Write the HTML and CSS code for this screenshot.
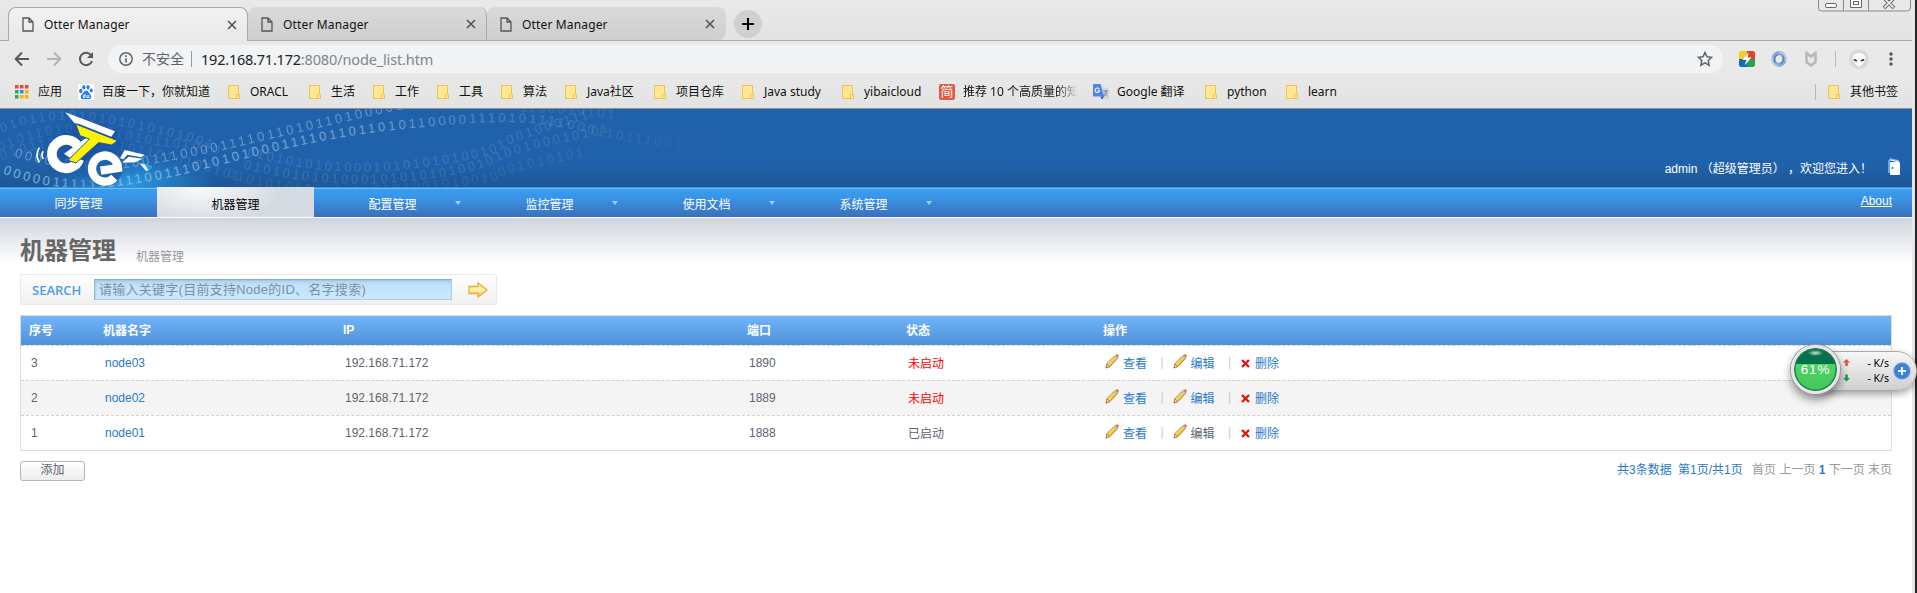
FILE: index.html
```html
<!DOCTYPE html>
<html lang="zh-CN">
<head>
<meta charset="utf-8">
<title>Otter Manager</title>
<link rel="stylesheet" href="styles.css">
</head>
<body>
<svg class="defs" width="0" height="0">
  <defs>
    <linearGradient id="pencilBody" x1="0" y1="0" x2="1" y2="1"><stop offset="0.3" stop-color="#fff09a"/><stop offset="0.7" stop-color="#e6a800"/></linearGradient>
    <linearGradient id="goFill" x1="0" y1="0" x2="0" y2="1"><stop offset="0" stop-color="#ffe08a"/><stop offset="0.5" stop-color="#fff3a8"/><stop offset="1" stop-color="#ffad5c"/></linearGradient>
    <radialGradient id="glow"><stop offset="0" stop-color="#2c9be6" stop-opacity="0.95"/><stop offset="1" stop-color="#2c9be6" stop-opacity="0"/></radialGradient>
    <radialGradient id="shade"><stop offset="0" stop-color="#174c9c" stop-opacity="0.75"/><stop offset="0.6" stop-color="#174c9c" stop-opacity="0.4"/><stop offset="1" stop-color="#174c9c" stop-opacity="0"/></radialGradient>
    <symbol id="page" viewBox="0 0 12 15"><path d="M1 1h6l4 4v9H1zM7 1v4h4" fill="none" stroke="#555" stroke-width="1.3"/></symbol>
    <symbol id="close" viewBox="0 0 10 10"><path d="M1 1l8 8M9 1L1 9" stroke="#505256" stroke-width="1.6"/></symbol>
    <symbol id="folder" viewBox="0 0 12 14"><path d="M.5.5h10V9.500h1V13.500H.5z" fill="#ffe694" stroke="#eac44b"/><path d="M8.500 13.500V9.500h3" fill="none" stroke="#eac44b"/></symbol>
    <symbol id="pencil" viewBox="0 0 14 15"><path d="M1 14l1-4.500L10 1.500l3 2.500L5 12.500z" fill="url(#pencilBody)" stroke="#a8782c" stroke-width=".9"/><path d="M1 14l1-4 2.700 2.500z" fill="#f0e0c0" stroke="#9c6a3a" stroke-width=".7"/><path d="M9.300 2.300l3 2.500" stroke="#b9c3c9" stroke-width="1.800"/><path d="M10.500 1l2 -.8 1.300 1.400-.6 2z" fill="#f35b1c"/></symbol>
    <symbol id="cross" viewBox="0 0 9 9"><path d="M1 1l7 7M8 1L1 8" stroke="#e60f0f" stroke-width="2.300"/></symbol>
  </defs>
</svg>
<div class="window">
  <div class="browser">
    <div class="tabs">
      <div class="tab active"><svg class="fav"><use href="#page"/></svg><span>Otter Manager</span><svg class="x"><use href="#close"/></svg></div>
      <div class="tab"><svg class="fav"><use href="#page"/></svg><span>Otter Manager</span><svg class="x"><use href="#close"/></svg></div>
      <div class="tab last"><svg class="fav"><use href="#page"/></svg><span>Otter Manager</span><svg class="x"><use href="#close"/></svg></div>
      <div class="newtab"><svg width="12" height="12"><path d="M6 0v12M0 6h12" stroke="#000" stroke-width="2"/></svg></div>
      <svg class="winbtns" width="94" height="12" viewBox="0 0 94 12"><g fill="none" stroke="#8b8b8b"><path d="M.5 0v8q0 3 3 3h86q3 0 3-3V0M25.500 0v11M50.500 0v11"/></g><g fill="#fff" stroke="#666"><rect x="7.500" y="3.500" width="11" height="4" rx="1.500"/><path d="M32.500-2v9.500h11V-2"/><rect x="35.500" y="1.500" width="5" height="3"/></g><path d="M66-2l10 10M76-2L66 8" stroke="#666" stroke-width="3.600"/><path d="M66.500-1.500l9 9M75.500-1.500l-9 9" stroke="#fff" stroke-width="1.600"/></svg>
    </div>
    <div class="toolbar">
      <svg width="16" height="16" viewBox="0 0 16 16"><path d="M15 8H2M8 1.500L1.700 8 8 14.500" fill="none" stroke="#55585c" stroke-width="2"/></svg>
      <svg width="16" height="16" viewBox="0 0 16 16"><path d="M1 8h13M8 1.500L14.300 8 8 14.500" fill="none" stroke="#b2b3b5" stroke-width="2"/></svg>
      <svg width="16" height="16" viewBox="0 0 16 16"><path d="M13.300 4.500A6.200 6.200 0 1 0 14 10" fill="none" stroke="#55585c" stroke-width="2"/><path d="M15 1v6H9z" fill="#55585c"/></svg>
      <div class="omnibox">
        <svg width="14" height="14" viewBox="0 0 14 14"><circle cx="7" cy="7" r="6.200" fill="none" stroke="#5f6368" stroke-width="1.500"/><path d="M7 6.200v4.300M7 3.300v1.700" stroke="#5f6368" stroke-width="1.600"/></svg>
        <span class="insecure">不安全</span><i class="bar"></i>
        <span class="url"><b>192.168.71.172</b>:8080/node_list.htm</span>
        <svg class="star" width="16" height="16" viewBox="0 0 16 16"><path d="M8 1.500l2 4.300 4.600.5-3.400 3.200.9 4.700L8 11.900l-4.100 2.300.9-4.700L1.400 6.300 6 5.800z" fill="none" stroke="#5f6368" stroke-width="1.500"/></svg>
      </div>
      <div class="exts">
        <svg width="16" height="16" viewBox="0 0 16 16"><defs><clipPath id="rc"><rect width="16" height="16" rx="2.500"/></clipPath></defs><g clip-path="url(#rc)"><path d="M0 0h8v8H0z" fill="#f6cf1d"/><path d="M8 0h8v8H8z" fill="#e53f34"/><path d="M0 8h8v8H0z" fill="#0e6dbd"/><path d="M8 8h8v8H8z" fill="#25a352"/></g><path d="M9.500 1.500L3.500 9H7.500L5.500 14.500 12.500 6.500H8.800z" fill="#fff"/></svg>
        <svg width="16" height="16" viewBox="0 0 16 16"><ellipse cx="8" cy="8" rx="5.400" ry="5.900" fill="none" stroke="#86a9d1" stroke-width="4.200"/><path d="M8 1A7 7 0 0 1 14.500 10M8 15A7 7 0 0 1 1.500 6" fill="none" stroke="#b4cbe4" stroke-width="1.500"/><path d="M4.500 11.500A5 5 0 0 1 7 3.500M9.500 12.500A5 5 0 0 0 11.500 5" fill="none" stroke="#557fb2" stroke-width="1.200"/></svg>
        <svg width="16" height="16" viewBox="0 0 16 16"><path d="M3.500 11V2L8 5.500 12.500 2v9L8 14.500z" fill="none" stroke="#b9b9b9" stroke-width="2.600"/></svg>
        <i class="bar"></i>
        <svg class="avatar" width="20" height="20" viewBox="0 0 20 20"><circle cx="10" cy="10" r="10" fill="#d9d9d9"/><path d="M3.500 9Q4 4 10 4t6.500 5Q16 14 10 18 4 14 3.500 9z" fill="#fafafa"/><ellipse cx="6.500" cy="11.300" rx="2" ry=".9" transform="rotate(25 6.500 11)" fill="#222"/><ellipse cx="13.500" cy="11.300" rx="2" ry=".9" transform="rotate(-25 13.500 11)" fill="#222"/></svg>
        <svg class="menu" width="4" height="14" viewBox="0 0 4 14" fill="#55585c"><circle cx="2" cy="2" r="1.700"/><circle cx="2" cy="7" r="1.700"/><circle cx="2" cy="12" r="1.700"/></svg>
      </div>
    </div>
    <div class="bookmarks">
      <div><svg width="14" height="14" viewBox="0 0 14 14"><path d="M0 0h3.500v3.500H0zM5 0h3.500v3.500H5zM10 0h3.500v3.500H10z" fill="#f04438"/><path d="M0 5h3.500v3.500H0z" fill="#31a853"/><path d="M5 5h3.500v3.500H5z" fill="#3b82f0"/><path d="M10 5h3.500v3.500H10z" fill="#f5b400"/><path d="M0 10h3.500v3.500H0z" fill="#31a853"/><path d="M5 10h3.500v3.500H5zM10 10h3.500v3.500H10z" fill="#f5b400"/></svg><span>应用</span></div>
      <div><svg width="16" height="16" viewBox="0 0 16 16"><path d="M0 0h16v16H0z" fill="#fff"/><g fill="#2d7df0"><ellipse cx="2.800" cy="7" rx="1.700" ry="2.200"/><ellipse cx="5.800" cy="3.200" rx="1.600" ry="2.200"/><ellipse cx="10" cy="3.200" rx="1.600" ry="2.200"/><ellipse cx="13.200" cy="6.500" rx="1.600" ry="2.100"/><path d="M8 6.500c2 0 2.500 2 4 3.500 2.500 2.500 1 5.500-1.500 5.300-1.500-.3-3-.3-5 0C3 15.500 1.500 12.500 4 10.200 5.500 9 6 6.500 8 6.500z"/></g><path d="M7 10v3.500H5.500v-2H7M9 11v2.500h2V11" fill="none" stroke="#fff" stroke-width=".9"/></svg><span>百度一下，你就知道</span></div>
      <div><svg class="fo"><use href="#folder"/></svg><span>ORACL</span></div>
      <div><svg class="fo"><use href="#folder"/></svg><span>生活</span></div>
      <div><svg class="fo"><use href="#folder"/></svg><span>工作</span></div>
      <div><svg class="fo"><use href="#folder"/></svg><span>工具</span></div>
      <div><svg class="fo"><use href="#folder"/></svg><span>算法</span></div>
      <div><svg class="fo"><use href="#folder"/></svg><span>Java社区</span></div>
      <div><svg class="fo"><use href="#folder"/></svg><span>项目仓库</span></div>
      <div><svg class="fo"><use href="#folder"/></svg><span>Java study</span></div>
      <div><svg class="fo"><use href="#folder"/></svg><span>yibaicloud</span></div>
      <div><em class="jian">简</em><span class="fade">推荐 10 个高质量的知</span></div>
      <div><svg width="16" height="16" viewBox="0 0 16 16"><path d="M6 3.500h10V15.500H9z" fill="#d4d7dc"/><path d="M1 0h6.500l3.800 12.500H1q-1 0-1-1V1q0-1 1-1z" fill="#4a86ee"/><path d="M7.500 12.500h3.800L8.700 15.500z" fill="#2c58b8"/><path d="M6.200 5A2.200 2.200 0 1 0 6.500 6.800H4.600" fill="none" stroke="#fff" stroke-width="1.100"/><path d="M10.500 7h4.500M12.700 6v1M14 7q-.7 3-3 5M11.500 8.500q1 2.500 3 3.500" fill="none" stroke="#75808c"/></svg><span>Google 翻译</span></div>
      <div><svg class="fo"><use href="#folder"/></svg><span>python</span></div>
      <div><svg class="fo"><use href="#folder"/></svg><span>learn</span></div>
      <div class="other"><svg class="fo"><use href="#folder"/></svg><span>其他书签</span></div>
    </div>
  </div>

  <div class="page">
    <header class="banner">
      <svg class="art" width="720" height="78" viewBox="0 12 2160 234">
        <defs>
          <path id="pa" d="M42 155Q250 215 440 180T700 128 1080 40 1350 18"/>
          <path id="pb" d="M8 205Q160 260 300 248T560 205 820 140 1080 88 1400 55 1755 82 2180 140"/>
          <path id="pc" d="M5 82Q140 30 280 50T560 108 700 180 900 270"/>
          <path id="pd" d="M0 140Q160 60 330 95T560 130 800 200 1000 290"/>
          <path id="pe" d="M5 165Q170 100 330 130T620 200 800 245"/>
          <path id="pf" d="M740 150Q980 220 1220 192T1500 135 1700 60 1850 0"/>
          <path id="pg" d="M730 190Q960 250 1180 232T1480 175 1700 110 1900 50"/>
          <path id="ph" d="M680 215Q900 290 1200 262T1500 220 1700 165 1900 140"/>
          <path id="pi" d="M1560 20Q1760 25 1980 62"/>
          <linearGradient id="fadeDigits" gradientUnits="userSpaceOnUse" x1="0" y1="0" x2="2160" y2="0"><stop offset="0" stop-color="#8fd0e4" stop-opacity=".75"/><stop offset=".25" stop-color="#9fd2f0" stop-opacity=".65"/><stop offset=".5" stop-color="#bcd4ee" stop-opacity=".55"/><stop offset=".75" stop-color="#a0c0e0" stop-opacity=".28"/><stop offset="1" stop-color="#a0c0e0" stop-opacity="0"/></linearGradient>
        </defs>
        <ellipse cx="390" cy="236" rx="260" ry="84" fill="url(#glow)"/>
        <g class="digits">
          <text opacity=".17"><textPath href="#pc">0101101010101010101001</textPath></text>
          <text opacity=".14"><textPath href="#pd">01011010101010101101010</textPath></text>
          <text opacity=".13"><textPath href="#pe">0101101010101011010100101</textPath></text>
          <text opacity=".17"><textPath href="#pf">010101010100010101010100101001000111</textPath></text>
          <text opacity=".16"><textPath href="#pg">01010101010001010101010010100100010101</textPath></text>
          <text opacity=".10"><textPath href="#ph">0101010100101010101001010010001010101</textPath></text>
          <text opacity=".12"><textPath href="#pi">1110010101</textPath></text>
          <text class="wide" opacity=".42"><textPath href="#pa">0000101011110011100001111011010110100001111</textPath></text>
          <text class="wide" fill="url(#fadeDigits)"><textPath href="#pb">0000011111111110011101010100011110110110101100001110101111000110111001010</textPath></text>
        </g>
        <ellipse cx="260" cy="135" rx="150" ry="115" fill="url(#shade)"/>
        <path d="M196 22L345 79 334 95 238 57 224 55z" fill="#fff"/>
        <path d="M235 126A42.500 42.500 0 1 0 238 162" fill="none" stroke="#fff" stroke-width="29"/>
        <path d="M192 146L250 104 262 98 276 106 210 158z" fill="#fff"/>
        <path d="M227 57L353 107 335 120 296 113 228 174 204 166 268 102 240 92z" fill="#fff200" stroke="#1b55a4" stroke-width="3"/>
        <circle cx="314" cy="190" r="54" fill="#1f62b0"/>
        <path d="M302 197L354 189A39 39 0 1 0 343 218" fill="none" stroke="#fff" stroke-width="25"/>
        <path d="M360 160L374 135 434 149 424 157 382 149 370 163z" fill="#fff"/>
        <path d="M366 173L386 155 428 161 406 172z" fill="#fff"/>
        <path d="M418 174L455 184Q452 197 438 198z" fill="#e8f7ff"/><path d="M434 178l21 6q-1 10-9 13z" fill="#21a4e8"/>
        <path d="M118 128q-14 22 0 44M130 139q-8 11 0 23" fill="none" stroke="#fff" stroke-width="5"/>
      </svg>
      <div class="welcome"><span>admin （超级管理员） ，欢迎您进入！</span>
        <svg width="13" height="18" viewBox="0 0 13 18"><path d="M1 15V3L2.500 1 11 3" fill="none" stroke="#86bdf5" stroke-width="1.500"/><path d="M2.500 2L11 4" stroke="#fff"/><rect x="2" y="4" width="10" height="13" rx="1" fill="#fff"/><circle cx="4.500" cy="10" r="1" fill="#2467b0"/></svg>
      </div>
    </header>
    <nav class="nav">
      <a class="first">同步管理</a><a class="current">机器管理</a><a class="drop">配置管理</a><a class="drop">监控管理</a><a class="drop">使用文档</a><a class="drop">系统管理</a>
      <span class="about">About</span>
    </nav>
    <main>
      <div class="heading"><h1>机器管理</h1><span>机器管理</span></div>
      <div class="search"><label>SEARCH</label><div class="field">请输入关键字(目前支持Node的ID、名字搜索)</div>
        <svg width="20" height="16" viewBox="0 0 20 16"><path d="M1 4.500h9V1l9 7-9 7v-3.500H1z" fill="url(#goFill)" stroke="#dfb436" stroke-width="1.300"/></svg></div>
      <div class="table">
        <div class="row head"><span>序号</span><span>机器名字</span><span>IP</span><span>端口</span><span>状态</span><span>操作</span></div>
        <div class="row"><span>3</span><a>node03</a><span>192.168.71.172</span><span>1890</span><span class="state off">未启动</span><span class="ops"><svg class="pen"><use href="#pencil"/></svg><a>查看</a><i>|</i><svg class="pen"><use href="#pencil"/></svg><a>编辑</a><i>|</i><svg class="del"><use href="#cross"/></svg><a>删除</a></span></div>
        <div class="row alt"><span>2</span><a>node02</a><span>192.168.71.172</span><span>1889</span><span class="state off">未启动</span><span class="ops"><svg class="pen"><use href="#pencil"/></svg><a>查看</a><i>|</i><svg class="pen"><use href="#pencil"/></svg><a>编辑</a><i>|</i><svg class="del"><use href="#cross"/></svg><a>删除</a></span></div>
        <div class="row"><span>1</span><a>node01</a><span>192.168.71.172</span><span>1888</span><span class="state">已启动</span><span class="ops"><svg class="pen"><use href="#pencil"/></svg><a>查看</a><i>|</i><svg class="pen"><use href="#pencil"/></svg><em>编辑</em><i>|</i><svg class="del"><use href="#cross"/></svg><a>删除</a></span></div>
      </div>
      <div class="footer"><button class="add">添加</button>
        <div class="pager"><a>共3条数据</a><a>第1页/共1页</a><span>首页</span><span>上一页</span><b>1</b><span>下一页</span><span>末页</span></div></div>
    </main>
  </div>
  <div class="meter">
    <div class="pill">
      <svg width="7" height="24" viewBox="0 0 7 24"><path d="M3.500 0L7 3.500H4.800V7H2.200V3.500H0z" fill="#e2553c"/><path d="M3.500 22.500L7 19H4.800V15.500H2.200V19H0z" fill="#1f9c4e"/></svg>
      <div class="rates"><span>- K/s</span><span>- K/s</span></div>
      <svg width="18" height="18" viewBox="0 0 18 18"><circle cx="9" cy="9" r="8.500" fill="#3b82dc" stroke="#b9bfc8"/><path d="M9 5v8M5 9h8" stroke="#fff" stroke-width="1.800"/></svg>
    </div>
    <div class="ball"><span>61%</span></div>
  </div>
</div>
</body>
</html>
```

FILE: styles.css
```css
* { box-sizing: border-box; }
body { margin: 0; overflow: hidden; font: 12px "Liberation Sans", "Noto Sans CJK SC", sans-serif; color: #5b6470; }
svg { flex: none; display: block; }
i, em { font-style: normal; }
.defs { position: absolute; }
.window { position: relative; width: 1917px; height: 593px; padding-right: 5px; background: linear-gradient(90deg, #e6e6e6 1915px, #222427 1915px); }

/* browser chrome */
.browser { height: 109px; background: #e8e8e8; border-bottom: 1px solid #8f8f8f; color: #111; font-family: "Noto Sans", "Noto Sans CJK SC", sans-serif; }
.tabs { position: relative; display: flex; height: 41px; padding: 7px 0 0 8px; background: linear-gradient(#e9e9e9, #e3e3e3); border-bottom: 1px solid #ababab; }
.tab { display: flex; align-items: center; width: 239px; height: 33px; padding: 1px 10px 0 13px; border-radius: 8px 8px 0 0; background: linear-gradient(#d9d9d9, #cfcfcf); border-right: 1px solid #aaa; }
.tab.last { border-right: 0; border-radius: 8px 8px 8px 0; padding-right: 11px; }
.tab.active { width: 240px; height: 34px; margin-bottom: -1px; background: linear-gradient(#f1f1f1, #e9e9e9); border: 1px solid #aaa; border-bottom: 0; padding: 0 10px 0 13px; }
.tab span { flex: 1; margin-left: 10px; letter-spacing: .15px; }
.fav { width: 12px; height: 15px; }
.x { width: 10px; height: 10px; }
.newtab { display: flex; align-items: center; justify-content: center; width: 28px; height: 28px; margin: 3px 0 0 8px; border-radius: 50%; background: #cfcfcf; }
.winbtns { position: absolute; right: 0; top: 0; }
.toolbar { display: flex; align-items: center; height: 36px; padding-left: 14px; gap: 16px; background: #e9e9e9; }
.omnibox { display: flex; align-items: center; width: 1615px; height: 28px; margin-left: -2px; padding: 0 10px 0 11px; border-radius: 14px; background: #f1f3f4; color: #5f6368; }
.insecure { width: 42px; margin-left: 9px; font-size: 14px; line-height: 20px; padding-bottom: 1px; white-space: nowrap; }
.bar { width: 1px; height: 16px; background: #b8babc; }
.omnibox .bar { margin: 0 9px 0 7px; background: #9a9da0; }
.url { padding-bottom: 1px; font-size: 14.5px; letter-spacing: -.14px; color: #80868b; }
.url b { font-weight: 400; letter-spacing: -.22px; color: #202124; }
.star { margin-left: auto; }
.exts { display: flex; align-items: center; gap: 16px; }
.exts .bar { margin: 0 -3px 0 0; }
.menu { margin-left: 4px; }
.bookmarks { display: grid; align-items: center; height: 31px; padding: 0 14px 2px 15px; grid-template-columns: 63px 150px 81px 64px 64px 64px 64px 89px 88px 100px 97px 154px 112px 81px 70px 1fr; background: linear-gradient(#e8e8e8, #e3e3e3); white-space: nowrap; }
.bookmarks div { display: flex; align-items: center; }
.bookmarks span { margin-left: 8px; padding-bottom: 1px; }
.bookmarks div:first-child span { margin-left: 9px; }
.fo { width: 12px; height: 14px; }
.bookmarks .fo + span { margin-left: 10px; }
.jian { width: 16px; height: 16px; border-radius: 2px; background: #e5583f; color: #fff; font-size: 13px; line-height: 15px; text-align: center; }
.fade { width: 115px; overflow: hidden; -webkit-mask-image: linear-gradient(90deg, #000 94px, transparent); mask-image: linear-gradient(90deg, #000 94px, transparent); }
.bookmarks .other { justify-self: end; height: 16px; padding-left: 12px; border-left: 1px solid #b8b8b8; }

/* page */
.page { height: 484px; background: #fff; }
.banner { position: relative; display: flex; height: 78px; background: linear-gradient(#1f61aa 72%, #1d5796); }
.art { overflow: hidden; }
.digits { font: 39px "Liberation Sans", sans-serif; letter-spacing: 8px; fill: #c5dcf4; }
.wide { letter-spacing: 9px; }
.welcome { display: flex; align-items: center; gap: 16px; height: 18px; margin: 49px 11px 0 auto; color: #fff; white-space: nowrap; }
.nav { display: flex; height: 31px; border-bottom: 1px solid #fff; background: linear-gradient(#3a93ea 1px, #78bcf6 1px, #78bcf6 2px, #379df4 2px, #3995e6 10px, #3a70bb); color: #fff; }
.nav a { position: relative; width: 157px; height: 30px; line-height: 36px; text-align: center; }
.nav .first { line-height: 34px; }
.nav .current { background: radial-gradient(ellipse 80px 35px at 28% 0, #fafafa, #d5dbe2); color: #000; }
.drop::after { content: ""; position: absolute; left: 141px; top: 14px; border: 3px solid transparent; border-top: 4px solid #9bd1fc; border-bottom: 0; }
.about { margin: 7px 20px 0 auto; text-decoration: underline; }
main { height: 375px; padding: 15px 20px 0; background: linear-gradient(#d0d5dd, #fff 45px); }
.heading { display: flex; align-items: flex-end; height: 36px; gap: 20px; }
.heading h1 { margin: 0; font-size: 24px; line-height: 36px; color: #666; }
.heading span { line-height: 18px; margin-bottom: 3px; color: #999; }
.search { display: flex; align-items: center; width: 477px; height: 31px; margin-top: 5px; padding: 0 8px 0 11px; border: 1px solid #e6e9ed; border-radius: 2px; background: linear-gradient(#fff, #f0f0f0); }
.search label { width: 62px; font: 600 13px "Open Sans", sans-serif; color: #4f9cec; }
.search svg { margin-left: auto; }
.field { width: 358px; height: 21px; padding-left: 5px; line-height: 22px; font-size: 13px; letter-spacing: .26px; color: #7d90a3; white-space: nowrap; background: linear-gradient(#a9cdf0, #c0e2fa 30%, #caebfe); box-shadow: inset 1px 1px 2px #86a8c4, inset -1px -1px 1px #b0cbdf; }
.table { margin-top: 10px; border: 1px solid #dcdcdc; }
.row { display: grid; grid-template-columns: 74px 240px 404px 159px 197px 1fr; align-items: center; height: 35px; border-top: 1px dashed #cfcfcf; background: #fff; }
.row > * { padding-left: 10px; }
.row.alt { background: #f4f4f4; }
.row.head { height: 29px; padding-bottom: 2px; border: 0; background: linear-gradient(#72b4fa, #4e92d9); color: #fff; font-weight: 700; }
.row.head > * { padding-left: 8px; }
.row a, .pager a { color: #2a79cc; }
.state, .ops { padding-bottom: 2px; }
.row .off { color: #f00; }
.ops { display: flex; align-items: center; }
.pen { width: 14px; height: 15px; margin: -2px 4px 0 0; }
.ops i { margin: 0 10px 0 13.5px; width: 2px; color: #ccc; }
.ops .del { width: 9px; height: 9px; margin: 2px 5px 0 1px; }
.footer { display: flex; justify-content: space-between; margin-top: 10px; }
.add { width: 65px; height: 20px; padding: 0 0 1px; border: 1px solid #b5b5b5; border-radius: 3px; background: linear-gradient(#fff, #ececec); font: 12px/15px "Liberation Sans", "Noto Sans CJK SC", sans-serif; color: #5b6470; }
.pager { display: flex; gap: 3.3px; line-height: 19px; color: #999; }
.pager a { margin-right: 3px; }
.pager a + a { margin-right: 6px; }
.pager b { color: #2a79cc; }

/* floating network meter */
.meter { position: absolute; left: 1791px; top: 345px; width: 126px; height: 62px; }
.pill { position: absolute; left: 24px; top: 6px; display: flex; align-items: center; width: 102px; height: 40px; padding: 0 5px 0 27px; border: 1px solid #aaa; border-radius: 0 20px 20px 0; background: linear-gradient(#f7f7f7, #cfcfcf); box-shadow: 0 3px 7px rgba(0, 0, 0, .35); }
.rates { display: flex; flex-direction: column; flex: 1; padding-right: 4px; text-align: right; font: 10.5px/15px "Noto Sans", sans-serif; color: #000; }
.ball { position: absolute; left: 0; top: 0; display: flex; align-items: center; justify-content: center; width: 49px; height: 49px; border: 3px solid #e6e6e6; border-radius: 50%; background: radial-gradient(ellipse 8px 3px at 50% 5px, #cfe9dc, transparent), linear-gradient(#08704a 38%, #4fd266 38%, #43c75b); background-clip: padding-box; box-shadow: 0 0 0 1px #999, inset 0 0 0 1.500px #177f4c, 0 5px 9px 1px rgba(0, 0, 0, .4); color: #fff; font-size: 13.5px; letter-spacing: .8px; }
```
